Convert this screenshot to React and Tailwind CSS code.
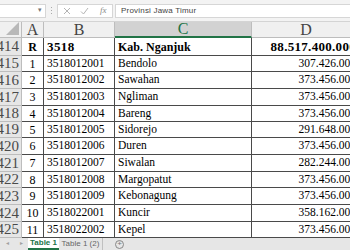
import React from "react";

const rows = [
  ["415", "1", "3518012001", "Bendolo", "307.426.000", 16],
  ["416", "2", "3518012002", "Sawahan", "373.456.000", 17],
  ["417", "3", "3518012003", "Ngliman", "373.456.000", 17],
  ["418", "4", "3518012004", "Bareng", "373.456.000", 16],
  ["419", "5", "3518012005", "Sidorejo", "291.648.000", 16],
  ["420", "6", "3518012006", "Duren", "373.456.000", 17],
  ["421", "7", "3518012007", "Siwalan", "282.244.000", 17],
  ["422", "8", "3518012008", "Margopatut", "373.456.000", 16],
  ["423", "9", "3518012009", "Kebonagung", "373.456.000", 17],
  ["424", "10", "3518022001", "Kuncir", "358.162.000", 17],
  ["425", "11", "3518022002", "Kepel", "373.456.000", 16],
];

const serif = { fontFamily: '"Liberation Serif", serif' };

function Row({ n, a, b, c, d, h, bold }) {
  const cellBase = "border-r border-b border-[#4a4a4a] flex items-center overflow-hidden whitespace-nowrap";
  return (
    <div className="flex" style={{ height: h }}>
      <div className="w-[22px] shrink-0 bg-[#e6e6e6] border-r border-b border-[#bdbdbd] flex items-center justify-end overflow-visible whitespace-nowrap pr-[2px] text-[15px] text-[#4a4a4a] leading-none">
        <span>{n}</span>
      </div>
      <div className={`w-[22px] shrink-0 justify-center text-[12px] text-black ${cellBase} ${bold ? "font-bold" : ""}`}>{a}</div>
      <div className={`w-[71px] shrink-0 pl-[3px] text-black ${cellBase} ${bold ? "font-bold text-[13px] tracking-[0.4px]" : "text-[11.5px]"}`}>{b}</div>
      <div className={`w-[137px] shrink-0 pl-[3px] text-black ${cellBase} ${bold ? "font-bold text-[12px]" : "text-[11.5px]"}`}>{c}</div>
      <div className={`w-[108px] shrink-0 justify-end pr-[3px] text-black ${cellBase} ${bold ? "font-bold text-[13px] tracking-[0.3px]" : "text-[11.5px]"}`}>{d}</div>
    </div>
  );
}

export default function App() {
  return (
    <div className="w-[350px] h-[250px] overflow-hidden bg-white flex flex-col" style={serif}>
      {/* formula bar */}
      <div className="h-[22px] shrink-0 bg-[#f3f3f3] border-b border-[#d4d4d4] flex items-center" style={{ fontFamily: '"Liberation Sans", sans-serif' }}>
        <div className="w-[46px] h-[14px] bg-white border-r border-y border-[#d6d6d6] flex items-center justify-end pr-[3px]">
          <span className="text-[7px] text-[#777]">▾</span>
        </div>
        <div className="w-[11px] flex flex-col items-center gap-[2px]">
          <span className="w-[1px] h-[1px] bg-[#aaa]" />
          <span className="w-[1px] h-[1px] bg-[#aaa]" />
          <span className="w-[1px] h-[1px] bg-[#aaa]" />
        </div>
        <div className="w-[56px] h-[14px] bg-white border border-[#d6d6d6] flex items-center pl-[5px] gap-[9px] text-[#b0b0b0]">
          <svg width="8" height="8" viewBox="0 0 8 8"><path d="M1 1L7 7M7 1L1 7" stroke="#b4b4b4" strokeWidth="1" /></svg>
          <svg width="9" height="8" viewBox="0 0 9 8"><path d="M1 4.5L3.5 7L8 1" stroke="#b4b4b4" strokeWidth="1" fill="none" /></svg>
          <span className="text-[9px] italic text-[#8a8a8a] ml-[2px]" style={serif}>fx</span>
        </div>
        <div className="ml-[2px] flex-1 h-[14px] bg-white border-y border-l border-[#d6d6d6] flex items-center pl-[5px]">
          <span className="text-[8px] text-[#444] tracking-[0.2px]">Provinsi Jawa Timur</span>
        </div>
      </div>

      {/* column headers */}
      <div className="h-[16px] shrink-0 flex bg-[#f0f0f0] text-[16px] text-[#444] leading-none">
        <div className="w-[22px] shrink-0 border-r border-b border-[#bdbdbd] relative overflow-hidden">
          <div className="absolute right-[2px] bottom-[2px] w-0 h-0 border-l-[13px] border-l-transparent border-b-[13px] border-b-[#b8b8b8]" />
        </div>
        <div className="w-[22px] shrink-0 border-r border-b border-[#bdbdbd] flex items-center justify-center">A</div>
        <div className="w-[71px] shrink-0 border-r border-b border-[#bdbdbd] flex items-center justify-center">B</div>
        <div className="w-[137px] shrink-0 bg-[#d2d2d2] border-r border-b-2 border-r-[#bdbdbd] border-b-[#217346] flex items-center justify-center text-[#217346]">C</div>
        <div className="w-[108px] shrink-0 border-b border-[#bdbdbd] flex items-center justify-center">D</div>
      </div>

      <Row n="414" a="R" b="3518" c="Kab. Nganjuk" d="88.517.400.000" h={18} bold />
      {rows.map((r) => (
        <Row key={r[0]} n={r[0]} a={r[1]} b={r[2]} c={r[3]} d={r[4]} h={r[5]} />
      ))}

      {/* sheet tabs */}
      <div className="flex-1 bg-[#e6e6e6] flex items-start text-[8px]" style={{ fontFamily: '"Liberation Sans", sans-serif' }}>
        <div className="w-[28px] flex items-center justify-around pt-[1px] text-[#a0a0a0] text-[6px]">
          <span>◂</span>
          <span>▸</span>
        </div>
        <div className="h-[12px] w-[31px] bg-white flex items-center justify-center font-bold text-[#217346] border-b-2 border-[#217346]">Table 1</div>
        <div className="h-[12px] w-[44px] flex items-center justify-center text-[#666] border-r border-[#c0c0c0]">Table 1 (2)</div>
        <div className="ml-[12px] h-[12px] flex items-center">
          <span className="w-[9px] h-[9px] rounded-full border border-[#888] flex items-center justify-center text-[8px] leading-none text-[#777]">+</span>
        </div>
      </div>
    </div>
  );
}
